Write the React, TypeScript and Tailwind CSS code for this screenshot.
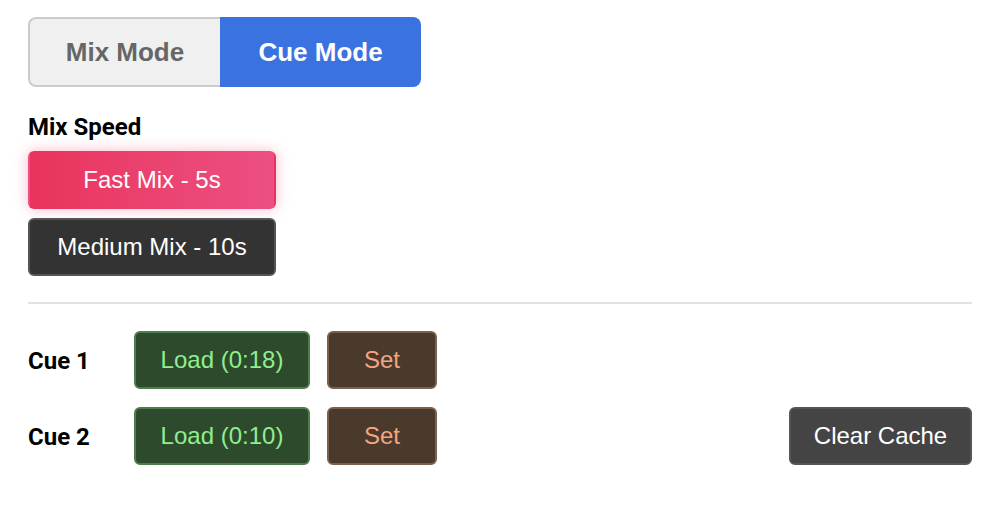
import React, { useState } from "react";

const App = () => {
  const [mode, setMode] = useState("cue");
  const [speed, setSpeed] = useState("fast");

  const label = "font-['Roboto',sans-serif] font-bold text-black";
  const btn =
    "font-['Liberation_Sans',Arial,sans-serif] text-[24px] rounded-[6px] border-2 flex items-center justify-center";

  return (
    <div className="w-[1008px] h-[524px] bg-white">
      <div className="ml-[28px] w-[944px] pt-[17px] flex flex-col">
        <div className="flex">
          <button
            onClick={() => setMode("mix")}
            className={`h-[70px] w-[192px] rounded-l-[8px] border-2 font-['Liberation_Sans',Arial,sans-serif] font-bold text-[26px] ${
              mode === "mix"
                ? "bg-[#3a73e0] border-[#3a73e0] text-white"
                : "bg-[#f0f0f0] border-[#cccccc] border-r-0 text-[#666666]"
            }`}
          >
            Mix Mode
          </button>
          <button
            onClick={() => setMode("cue")}
            className={`h-[70px] w-[201px] rounded-r-[8px] font-['Liberation_Sans',Arial,sans-serif] font-bold text-[26px] ${
              mode === "cue"
                ? "bg-[#3a73e0] text-white"
                : "bg-[#f0f0f0] border-2 border-[#cccccc] text-[#666666]"
            }`}
          >
            Cue Mode
          </button>
        </div>

        <div className={`${label} text-[24px] mt-[26px] leading-[28px]`}>Mix Speed</div>

        <button
          onClick={() => setSpeed("fast")}
          className={`${btn} mt-[10px] w-[248px] h-[58px] text-white ${
            speed === "fast"
              ? "bg-gradient-to-r from-[#e9335c] to-[#ec4f82] border-transparent shadow-[0_0_14px_rgba(236,64,110,0.35)]"
              : "bg-[#333333] border-[#555555]"
          }`}
        >
          Fast Mix - 5s
        </button>
        <button
          onClick={() => setSpeed("medium")}
          className={`${btn} mt-[9px] w-[248px] h-[58px] text-white ${
            speed === "medium"
              ? "bg-gradient-to-r from-[#e9335c] to-[#ec4f82] border-transparent shadow-[0_0_14px_rgba(236,64,110,0.35)]"
              : "bg-[#333333] border-[#555555]"
          }`}
        >
          Medium Mix - 10s
        </button>

        <div className="mt-[26px] h-[2px] bg-[#e2e2e2]" />

        <div className="mt-[27px] flex flex-col gap-[18px]">
          {[
            { name: "Cue 1", time: "0:18" },
            { name: "Cue 2", time: "0:10" },
          ].map((c, i) => (
            <div key={c.name} className="flex items-center h-[58px]">
              <div className={`${label} text-[24px] w-[106px] mt-[2px]`}>{c.name}</div>
              <button
                className={`${btn} w-[176px] h-[58px] bg-[#2e4a2c] border-[#4f7d4c] text-[#90ee90]`}
              >
                Load ({c.time})
              </button>
              <button
                className={`${btn} ml-[17px] w-[110px] h-[58px] bg-[#4a3a2b] border-[#7b604a] text-[#f4a583]`}
              >
                Set
              </button>
              {i === 1 && (
                <button
                  className={`${btn} ml-auto w-[183px] h-[58px] bg-[#444444] border-[#555555] text-white`}
                >
                  Clear Cache
                </button>
              )}
            </div>
          ))}
        </div>
      </div>
    </div>
  );
};

export default App;
